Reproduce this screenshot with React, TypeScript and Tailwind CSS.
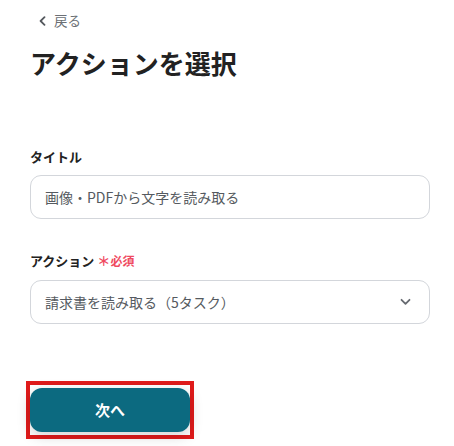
import React from "react";

export default function App() {
  return (
    <div
      className="w-[454px] h-[446px] bg-white overflow-hidden pl-[30px] pr-[24px]"
      style={{ fontFamily: '"Noto Sans CJK JP", "Noto Sans", sans-serif' }}
    >
      <div className="flex items-center gap-[7px] pt-[11px] pl-[8px] h-[30px] text-[13.5px] text-[#6b6f75]">
        <svg width="9" height="10" viewBox="0 0 9 10" fill="none">
          <path d="M6.5 1.2 L2.6 5 L6.5 8.8" stroke="#55595e" strokeWidth="1.8" strokeLinecap="round" strokeLinejoin="round" />
        </svg>
        <span className="leading-none">戻る</span>
      </div>
      <h1 className="mt-[16px] text-[26px] font-bold leading-[34px] text-[#222] tracking-[0px]">
        アクションを選択
      </h1>
      <div className="mt-[67px] text-[13px] font-bold leading-[20px] text-[#222]">タイトル</div>
      <div className="mt-[8px] h-[44px] w-[400px] rounded-[11px] border border-[#d3d6db] flex items-center px-[14px] text-[14px] text-[#555a60]">
        画像・PDFから文字を読み取る
      </div>
      <div className="mt-[32px] flex items-center text-[13px] font-bold leading-[20px] text-[#222]">
        <span>アクション</span>
        <span className="ml-[3px] text-[#ef4a5f] font-bold">＊</span>
        <span className="text-[#ef4a5f] font-bold text-[12px]">必須</span>
      </div>
      <div className="mt-[9px] h-[44px] w-[400px] rounded-[11px] border border-[#d3d6db] flex items-center justify-between pl-[14px] pr-[18px] text-[14px] text-[#555a60]">
        <span>請求書を読み取る（5タスク）</span>
        <svg width="11" height="8" viewBox="0 0 11 8" fill="none">
          <path d="M1.5 1.8 L5.5 5.8 L9.5 1.8" stroke="#666a70" strokeWidth="1.8" strokeLinecap="round" strokeLinejoin="round" />
        </svg>
      </div>
      <div className="mt-[57px] -ml-[4px] w-[168px] h-[58px] border-[4px] border-[#e01b1b] flex items-center justify-center">
        <button className="w-[160px] h-[44px] rounded-[12px] bg-[#0c6a80] text-white text-[15px] font-bold shadow-[0_4px_14px_rgba(0,0,0,0.18)]">
          次へ
        </button>
      </div>
    </div>
  );
}
